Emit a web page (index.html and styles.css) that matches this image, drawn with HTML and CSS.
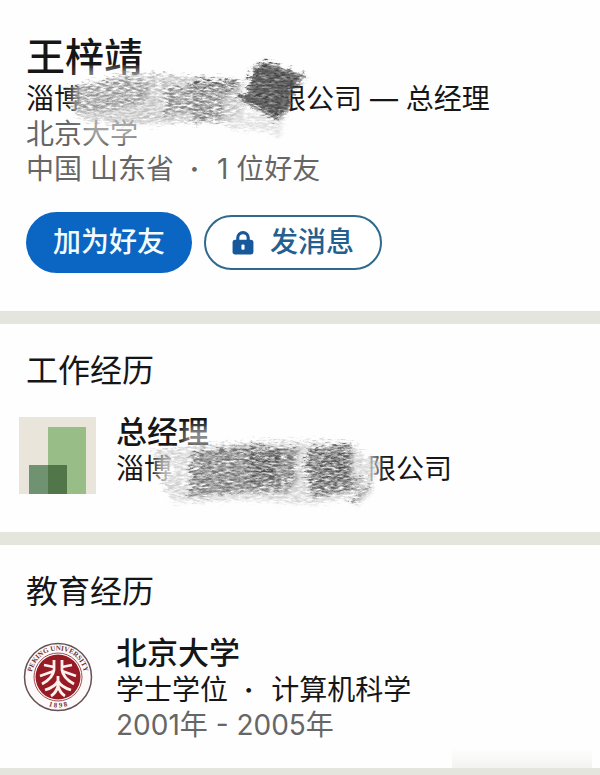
FILE: index.html
```html
<!DOCTYPE html>
<html lang="zh-CN">
<head>
<meta charset="utf-8">
<meta name="viewport" content="width=device-width, initial-scale=1">
<title>王梓靖</title>
<link rel="stylesheet" href="styles.css">
</head>
<body>
<svg class="defs" aria-hidden="true">
  <defs>
    <filter id="pencil" x="-10%" y="-10%" width="120%" height="120%">
      <feTurbulence type="fractalNoise" baseFrequency="0.16 0.5" numOctaves="4" seed="7" result="noise"/>
      <feColorMatrix in="noise" type="matrix" values="0 0 0 0 0  0 0 0 0 0  0 0 0 0 0  1.8 1.4 0 0 -1" result="grain"/>
      <feGaussianBlur in="SourceGraphic" stdDeviation="1.5" result="soft"/>
      <feDisplacementMap in="soft" in2="noise" scale="16" xChannelSelector="R" yChannelSelector="G" result="rough"/>
      <feComposite in="rough" in2="grain" operator="in"/>
      <feGaussianBlur stdDeviation="0.4"/>
    </filter>
    <filter id="haze" x="-20%" y="-30%" width="140%" height="160%">
      <feGaussianBlur stdDeviation="4"/>
    </filter>
  </defs>
</svg>
<main>
  <header class="section profile">
    <h1 class="name">王梓靖</h1>
    <p class="line">淄博<span class="redacted"><svg class="scribble" viewBox="60 50 260 100" aria-hidden="true">
      <path d="M74 84L150 78L284 78L284 120L74 118Z" fill="#fff" opacity=".7" filter="url(#haze)"/>
      <path d="M76 68H150V80H76Z" fill="#fff" opacity=".5" filter="url(#haze)"/>
      <path d="M84 116H140V140H84Z" fill="#fff" opacity=".4" filter="url(#haze)"/>
      <g filter="url(#pencil)">
        <path d="M66 88L98 80L128 72L220 77L246 80L240 92L246 108L230 122L180 122L130 124L84 120L70 106L78 94Z" fill="#8a8a8a" opacity=".55"/>
        <path d="M80 86L126 78L150 84L148 102L112 110L78 112Z" fill="#666" opacity=".5"/>
        <path d="M168 88L194 82L192 112L166 116Z" fill="#666" opacity=".6"/>
        <path d="M192 80H242L236 90L224 98V120L192 122Z" fill="#555" opacity=".6"/>
        <path d="M230 112L284 110L282 136L262 130L228 128Z" fill="#aaa" opacity=".4"/>
        <path d="M192 81H243L194 85L238 89" fill="none" stroke="#444" stroke-width="2"/>
      </g>
      <path d="M254 70L264 63L300 76L295 83L290 91V106L276 116L244 97L250 90L252 78Z" fill="#888" opacity=".75"/>
      <g filter="url(#pencil)">
        <path d="M252 68L264 60L306 76L299 86L291 91V108L278 120L238 97L248 90L250 78Z" fill="#333" opacity=".85"/>
      </g>
      <path d="M263 62L306 76L253 67L300 85L250 76L296 94L246 86L292 102L238 95L290 109L242 99L279 119" fill="none" stroke="#555" stroke-width="2" opacity=".5"/>
    </svg></span>限公司 — 总经理</p>
    <p class="line muted">北京大学</p>
    <p class="line muted">中国 山东省 <span class="dot">·</span> 1 位好友</p>
    <div class="actions">
      <button class="btn primary" type="button">加为好友</button>
      <button class="btn outline" type="button"><svg class="lock" viewBox="0 0 20 23" aria-hidden="true"><path d="M5 10V6.500A5 5 0 0 1 15 6.500V10" fill="none" stroke="#17589d" stroke-width="3"/><rect y="8.500" width="20" height="14" rx="2.500" fill="#17589d"/><rect x="8.500" y="13" width="3" height="5" rx="1" fill="#fff"/></svg>发消息</button>
    </div>
  </header>

  <section class="section">
    <h2 class="heading">工作经历</h2>
    <div class="entry">
      <div class="logo">
        <svg viewBox="0 0 77 77" role="img" aria-label="公司"><path d="M0 0H77V77H0Z" fill="#e9e5db"/><path d="M29 10H67V77H29Z" fill="#98bd86"/><path d="M10 48H48V77H10Z" fill="#6f9370"/><path d="M29 48H48V77H29Z" fill="#507649"/></svg>
      </div>
      <div class="details">
        <h3 class="title">总经理</h3>
        <p class="line">淄博<span class="redacted"><svg class="scribble" viewBox="150 420 260 100" aria-hidden="true">
          <path d="M158 452H378V498H158Z" fill="#fff" opacity=".7" filter="url(#haze)"/>
          <path d="M184 426H214V446H184Z" fill="#fff" opacity=".5" filter="url(#haze)"/>
          <g filter="url(#pencil)">
            <path d="M150 450L200 444L264 440L352 441L362 452L382 462L372 480L374 490L358 505L346 498L312 504L250 499L174 502L168 492L160 480L180 470L158 462Z" fill="#999" opacity=".45"/>
            <path d="M190 452L256 445L300 448L296 462L299 476L290 492L240 492L188 496L193 482L190 470L194 462Z" fill="#555" opacity=".75"/>
            <path d="M308 448L352 444L353 478L358 490L310 492L306 464Z" fill="#444" opacity=".8"/>
            <path d="M250 450H282L278 480L252 484Z" fill="#333" opacity=".6"/>
            <path d="M320 454H350L346 478H322Z" fill="#333" opacity=".5"/>
            <path d="M312 486L366 477L314 496L370 486L354 503" fill="none" stroke="#555" stroke-width="2"/>
          </g>
          <path d="M190 454L264 444L194 460L300 448L192 472L296 460L190 482L294 472L188 493L250 485M308 451L352 445L308 462L353 455L310 475L354 467L312 486L358 477" fill="none" stroke="#777" stroke-width="4" opacity=".25"/>
        </svg></span>限公司</p>
      </div>
    </div>
  </section>

  <section class="section education">
    <h2 class="heading">教育经历</h2>
    <div class="entry">
      <div class="logo">
        <svg class="seal" viewBox="0 0 70 70" role="img" aria-label="北京大学">
          <defs><path id="ringTop" d="M12 48A26.500 26.500 0 1 1 58 48"/><path id="ringBottom" d="M16 59A31 31 0 0 0 54 59"/></defs>
          <circle cx="35" cy="35" r="33.500" fill="#fffafa" stroke="#655052" stroke-width="1.500"/>
          <circle cx="35" cy="35" r="24" fill="#fff" stroke="#a14a50"/>
          <circle cx="35" cy="35" r="22.500" fill="#971b24"/>
          <g class="seal-text"><text><textPath href="#ringTop" startOffset="50%" text-anchor="middle">PEKING  UNIVERSITY</textPath></text><text><textPath href="#ringBottom" startOffset="50%" text-anchor="middle">1 8 9 8</textPath></text></g>
          <g fill="none" stroke="#fff1ee" stroke-width="2.800">
            <path d="M31 18V28Q30 36 19 42M21 23L31 25M17 34L31 29"/>
            <path d="M39 18V28Q40 36 51 42M49 23L39 25M53 34L39 29"/>
            <path d="M35 34V39Q32 45 22 48M35 39Q38 45 48 48M28 54Q33 51 35 44Q37 51 42 54"/>
          </g>
        </svg>
      </div>
      <div class="details">
        <h3 class="title">北京大学</h3>
        <p class="line">学士学位 <span class="dot">·</span> 计算机科学</p>
        <p class="line muted">2001年 - 2005年</p>
      </div>
    </div>
    <div class="smudge"></div>
  </section>
</main>
</body>
</html>
```
FILE: styles.css
```css
* { box-sizing: border-box; }

body {
  margin: 0;
  min-height: 100vh;
  background: #e4e5dc;
  color: #161616;
  font-family: Inter, "Noto Sans CJK SC", sans-serif;
}

h1, h2, h3, p { margin: 0; }

.defs { position: absolute; width: 0; height: 0; }

.section {
  position: relative;
  margin-bottom: 13px;
  padding: 27px 19px 38px;
  background: #fefefe;
}

.profile { padding: 32px 26px 38px; }

.education { margin-bottom: 0; padding-bottom: 25px; }

.name { font-size: 39px; line-height: 50px; font-weight: 500; }

.line { font-size: 28px; line-height: 35px; white-space: nowrap; }

.muted { color: #666; }

.dot { margin: 0 10px 0 8px; font-weight: 700; }

.heading { padding-left: 7px; font-size: 32px; line-height: 40px; font-weight: 400; }

.title { font-size: 31px; line-height: 40px; font-weight: 500; }

.redacted { position: relative; display: inline-block; width: 7em; }

.scribble {
  position: absolute;
  left: -22px;
  bottom: -42px;
  width: 260px;
  height: 100px;
}

.actions {
  display: flex;
  align-items: center;
  gap: 12px;
  margin-top: 25px;
}

.btn {
  display: flex;
  align-items: center;
  border-radius: 31px;
  font: inherit;
  font-size: 28px;
  line-height: 41px;
  font-weight: 500;
}

.primary { padding: 10px 27px; border: 0; background: #0a66c2; color: #f2fcff; }

.outline {
  gap: 16px;
  padding: 5px 26px;
  border: 2px solid #2f6a8e;
  background: #fff;
  color: #24608f;
}

.lock { width: 22px; height: 24px; }

.entry { display: flex; gap: 20px; margin-top: 21px; }

.logo {
  display: grid;
  place-items: center;
  flex: none;
  width: 77px;
  height: 77px;
  margin-top: 5px;
}

.logo svg { display: block; width: 100%; }

.logo .seal { width: 70px; }

.seal-text { fill: #6b3034; font: 700 7px "Liberation Serif", serif; }

.smudge {
  position: absolute;
  right: 8px;
  bottom: 0;
  width: 140px;
  height: 20px;
  background: linear-gradient(to bottom, transparent, #f3f3f1);
}
```
